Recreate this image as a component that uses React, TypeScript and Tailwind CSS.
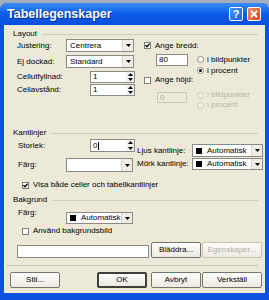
import React from "react";

// Windows XP style dialog: "Tabellegenskaper"

function GroupHeader({ label }: { label: string }) {
  return (
    <div className="flex h-[8px] items-center">
      <span className="leading-none">{label}</span>
      <div className="ml-[5px] mr-[3px] h-px flex-1 bg-[#d0cfbf]" />
    </div>
  );
}

function Arrow({ up }: { up?: boolean }) {
  return (
    <svg width="5" height="3" viewBox="0 0 5 3">
      <path d={up ? "M0 3H5L2.5 0Z" : "M0 0H5L2.5 3Z"} fill="#000" />
    </svg>
  );
}

function DropButton() {
  return (
    <div className="flex h-full w-[11px] shrink-0 items-center justify-center border-l border-[#d8d6cc] bg-[#efede4]">
      <Arrow />
    </div>
  );
}

function Combo({ value, className }: { value: string; className: string }) {
  return (
    <div className={`flex shrink-0 border border-[#8b8b86] bg-white ${className}`}>
      <span className="flex flex-1 items-center pl-[3px] leading-none">{value}</span>
      <DropButton />
    </div>
  );
}

function ColorCombo({ className }: { className: string }) {
  return (
    <div className={`flex shrink-0 border border-[#8b8b86] bg-white ${className}`}>
      <div className="flex min-w-0 flex-1 items-center pl-[3px]">
        <div className="h-[6px] w-[6px] shrink-0 bg-black" />
        <span className="ml-[5px] whitespace-nowrap leading-none">Automatisk</span>
      </div>
      <DropButton />
    </div>
  );
}

function Spinner({ value, cursor, className }: { value: string; cursor?: boolean; className: string }) {
  return (
    <div className={`flex shrink-0 border border-[#8b8b86] bg-white ${className}`}>
      <span className="flex flex-1 items-center pl-[2px] leading-none">
        {value}
        {cursor && <span className="ml-px h-[8px] w-px bg-black" />}
      </span>
      <div className="flex w-[8px] flex-col bg-[#f3f2ec]">
        <div className="flex flex-1 items-center justify-center">
          <Arrow up />
        </div>
        <div className="flex flex-1 items-center justify-center">
          <Arrow />
        </div>
      </div>
    </div>
  );
}

function TextBox({ value, disabled, className }: { value: string; disabled?: boolean; className: string }) {
  return (
    <div
      className={`flex shrink-0 items-center border pl-[2px] leading-none ${
        disabled ? "border-[#c9c7ba] bg-[#ece9d8] text-[#aca899]" : "border-[#8b8b86] bg-white"
      } ${className}`}
    >
      {value}
    </div>
  );
}

function Checkbox({ checked }: { checked?: boolean }) {
  return (
    <div className="flex h-[7px] w-[7px] shrink-0 items-center justify-center border border-[#7f7f7a] bg-white">
      {checked && (
        <svg width="5" height="5" viewBox="0 0 5 5">
          <path d="M0.4 2.2L1.9 3.8L4.6 0.8" stroke="#000" strokeWidth="1.3" fill="none" />
        </svg>
      )}
    </div>
  );
}

function Radio({ label, checked, disabled }: { label: string; checked?: boolean; disabled?: boolean }) {
  return (
    <div className="flex flex-1 items-center">
      <div
        className={`flex h-[7px] w-[7px] shrink-0 items-center justify-center rounded-full border ${
          disabled ? "border-[#cac8bc] bg-[#f1efe6]" : "border-[#8b8b86] bg-white"
        }`}
      >
        {checked && <div className="h-[3px] w-[3px] rounded-full bg-black" />}
      </div>
      <span className={`ml-[3px] leading-none ${disabled ? "text-[#b9b6a8]" : ""}`}>{label}</span>
    </div>
  );
}

function Btn({
  label,
  className,
  disabled,
  primary,
}: {
  label: string;
  className: string;
  disabled?: boolean;
  primary?: boolean;
}) {
  return (
    <div
      className={`flex h-[16px] shrink-0 items-center justify-center rounded-[2px] bg-gradient-to-b from-[#fdfdfb] to-[#eceae1] leading-none ${
        primary ? "border-2 border-[#3f3f3c]" : disabled ? "border border-[#c5c2b2]" : "border border-[#74746e]"
      } ${disabled ? "text-[#b3b0a2]" : ""} ${className}`}
    >
      {label}
    </div>
  );
}

export default function App() {
  return (
    <div className="h-[300px] w-[269px] overflow-hidden bg-[#a3acbb] pt-[3px] font-['Liberation_Sans',Arial,sans-serif] text-[8px] text-black">
      <div className="flex h-[297px] flex-col rounded-t-[7px] bg-[#0a53e0]">
        {/* Title bar */}
        <div className="flex h-[22px] shrink-0 items-center rounded-t-[7px] bg-gradient-to-b from-[#3c8cf6] via-[#0a5ce8] to-[#0650dc] pl-[7px] pr-[8px]">
          <span className="flex-1 text-[12.5px] font-bold leading-none text-white [text-shadow:1px_1px_0_#0a2e8c]">
            Tabellegenskaper
          </span>
          <div className="flex h-[14px] w-[14px] items-center justify-center rounded-[2px] border border-white bg-gradient-to-br from-[#4a8ff8] to-[#1a5ee6] text-[11px] font-bold leading-none text-white">
            ?
          </div>
          <div className="ml-[4px] flex h-[14px] w-[14px] items-center justify-center rounded-[2px] border border-white bg-gradient-to-br from-[#ef8a62] to-[#d8431c]">
            <svg width="8" height="8" viewBox="0 0 8 8">
              <path d="M1 1L7 7M7 1L1 7" stroke="#fff" strokeWidth="1.8" />
            </svg>
          </div>
        </div>

        {/* Body */}
        <div className="mx-[4px] flex h-[268px] flex-col bg-[#ece9d8] pl-[9px] pr-[4px] pt-[5px]">
          <GroupHeader label="Layout" />
          <div className="mt-px flex">
            <div className="flex w-[124px] shrink-0 flex-col pl-[4px]">
              <div className="flex h-[13px] items-center">
                <span className="w-[49px] shrink-0 leading-none">Justering:</span>
                <Combo value="Centrera" className="h-[13px] w-[68px]" />
              </div>
              <div className="mt-[3px] flex h-[13px] items-center">
                <span className="w-[49px] shrink-0 leading-none">Ej dockad:</span>
                <Combo value="Standard" className="h-[13px] w-[68px]" />
              </div>
              <div className="mt-[3px] flex h-[12px] items-center">
                <span className="w-[73px] shrink-0 leading-none">Cellutfyllnad:</span>
                <Spinner value="1" className="h-[12px] w-[45px]" />
              </div>
              <div className="mt-px flex h-[12px] items-center">
                <span className="w-[73px] shrink-0 leading-none">Cellavstånd:</span>
                <Spinner value="1" className="h-[12px] w-[45px]" />
              </div>
            </div>
            <div className="ml-[7px] flex flex-1 flex-col">
              <div className="flex h-[13px] items-center">
                <Checkbox checked />
                <span className="ml-[4px] leading-none">Ange bredd:</span>
              </div>
              <div className="mt-[2px] flex">
                <TextBox value="80" className="ml-[12px] h-[12px] w-[32px]" />
                <div className="ml-[9px] flex h-[22px] flex-col">
                  <Radio label="i bildpunkter" />
                  <Radio label="i procent" checked />
                </div>
              </div>
              <div className="flex h-[8px] items-center">
                <Checkbox />
                <span className="ml-[4px] leading-none">Ange höjd:</span>
              </div>
              <div className="mt-[6px] flex">
                <TextBox value="0" disabled className="ml-[13px] mt-[2px] h-[11px] w-[30px]" />
                <div className="ml-[10px] flex h-[20px] flex-col">
                  <Radio label="i bildpunkter" disabled />
                  <Radio label="i procent" disabled />
                </div>
              </div>
            </div>
          </div>

          <div className="mt-[19px]">
            <GroupHeader label="Kantlinjer" />
          </div>
          <div className="mt-[2px] flex">
            <div className="flex w-[124px] shrink-0 flex-col pl-[5px]">
              <div className="flex h-[13px] items-center">
                <span className="w-[72px] shrink-0 leading-none">Storlek:</span>
                <Spinner value="0" cursor className="h-[13px] w-[45px]" />
              </div>
              <div className="mt-[6px] flex h-[14px] items-center">
                <span className="w-[48px] shrink-0 leading-none">Färg:</span>
                <Combo value="" className="h-[14px] w-[67px]" />
              </div>
            </div>
            <div className="flex flex-col">
              <div className="mt-[5px] flex h-[13px] items-center">
                <span className="w-[55px] shrink-0 leading-none">Ljus kantlinje:</span>
                <ColorCombo className="h-[13px] w-[71px]" />
              </div>
              <div className="mt-px flex h-[12px] items-center">
                <span className="w-[55px] shrink-0 leading-none">Mörk kantlinje:</span>
                <ColorCombo className="h-[12px] w-[71px]" />
              </div>
            </div>
          </div>
          <div className="mt-[8px] flex h-[10px] items-center pl-[9px]">
            <Checkbox checked />
            <span className="ml-[4px] leading-none">Visa både celler och tabellkantlinjer</span>
          </div>

          <div className="mt-[6px]">
            <GroupHeader label="Bakgrund" />
          </div>
          <div className="mt-[5px] flex items-start pl-[5px]">
            <span className="w-[48px] shrink-0 leading-[8px]">Färg:</span>
            <ColorCombo className="mt-[3px] h-[12px] w-[67px]" />
          </div>
          <div className="mt-[2px] flex h-[10px] items-center pl-[9px]">
            <Checkbox />
            <span className="ml-[4px] leading-none">Använd bakgrundsbild</span>
          </div>
          <div className="mt-[6px] flex pl-[4px]">
            <TextBox value="" className="mt-[3px] h-[13px] w-[132px]" />
            <Btn label="Bläddra..." className="ml-[2px] w-[50px]" />
            <Btn label="Egenskaper..." disabled className="ml-px w-[60px]" />
          </div>

          <div className="-ml-[7px] mr-[3px] mt-[7px] h-px bg-[#c9c6b5]" />

          <div className="mt-[6px] flex">
            <Btn label="Stil..." className="-ml-[3px] w-[50px]" />
            <Btn label="OK" primary className="ml-[37px] w-[50px]" />
            <Btn label="Avbryt" className="ml-[4px] w-[50px]" />
            <Btn label="Verkställ" className="ml-px w-[60px]" />
          </div>
        </div>
      </div>
    </div>
  );
}
